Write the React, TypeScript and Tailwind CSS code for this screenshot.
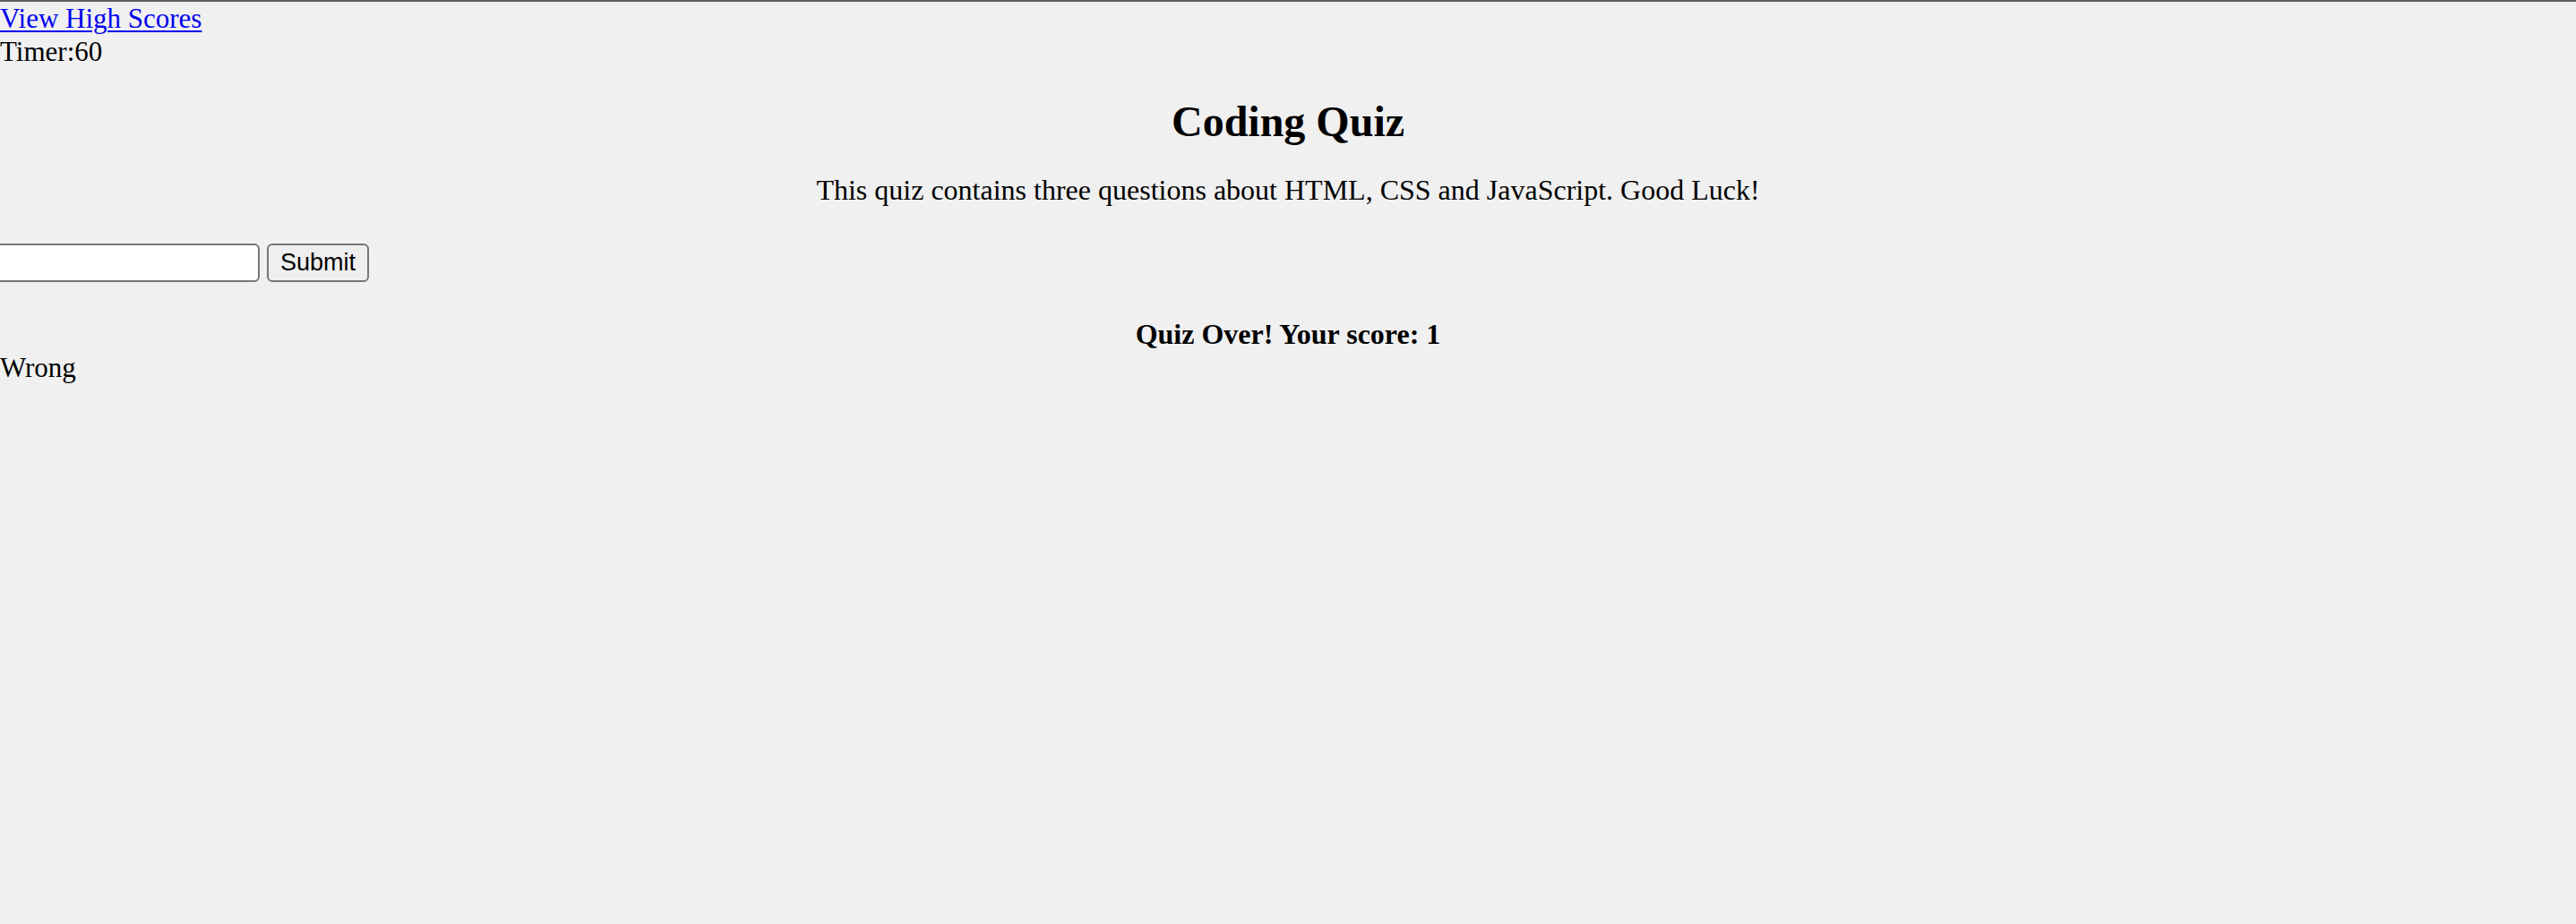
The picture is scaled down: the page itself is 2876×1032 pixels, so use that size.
import React from "react";

export default function App() {
  return (
    <div
      className="min-h-screen w-full bg-[#f0f0f0] border-t-2 border-[#5e5e60] text-black overflow-hidden"
      style={{ fontFamily: '"Liberation Serif", "Times New Roman", serif' }}
    >
      <div className="text-[31px] leading-[37px]">
        <a href="#" className="text-[#0000ee] underline underline-offset-[3px] decoration-[2px]">
          View High Scores
        </a>
      </div>
      <div className="text-[31px] leading-[37px]">Timer:60</div>
      <h1 className="mt-[32px] text-center text-[48px] leading-[55px] font-bold">Coding Quiz</h1>
      <p className="mt-[31px] text-center text-[32px] leading-[37px]">
        This quiz contains three questions about HTML, CSS and JavaScript. Good Luck!
      </p>
      <div className="mt-[41px] flex items-center gap-[8px]">
        <input
          type="text"
          className="-ml-[48px] w-[338px] h-[43px] bg-white border-2 border-[#767676] rounded-[6px] px-[4px] text-[27px] outline-none"
          style={{ fontFamily: '"Liberation Sans", Arial, sans-serif' }}
        />
        <button
          className="h-[43px] px-[13px] bg-[#efefef] border-2 border-[#767676] rounded-[6px] text-[27px] leading-none text-black"
          style={{ fontFamily: '"Liberation Sans", Arial, sans-serif' }}
        >
          Submit
        </button>
      </div>
      <div className="mt-[40px] text-center text-[32px] leading-[37px] font-bold">Quiz Over! Your score: 1</div>
      <div className="text-[31px] leading-[37px]">Wrong</div>
    </div>
  );
}
